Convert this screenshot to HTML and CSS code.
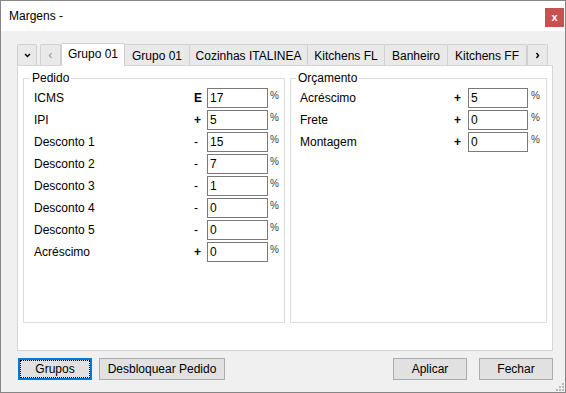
FILE: index.html
```html
<!DOCTYPE html>
<html lang="pt">
<head>
    <meta charset="UTF-8">
    <title>Margens -</title>
    <link rel="stylesheet" href="styles.css">
</head>
<body>
    <div class="window">
        <div class="titlebar">
            <span class="title">Margens -</span>
            <button class="close">x</button>
        </div>

        <div class="client">
            <div class="tabs">
                <div class="tab-btn tab-btn-menu">
                    <svg width="7" height="5" viewBox="0 0 7 5"><path d="M1 1 L3.5 3.5 L6 1" fill="none" stroke="#000" stroke-width="1.4"/></svg>
                </div>
                <div class="tab-btn tab-btn-prev">
                    <svg width="5" height="7" viewBox="0 0 5 7"><path d="M3.5 1 L1.5 3.5 L3.5 6" fill="none" stroke="#9a9a9a" stroke-width="1.2"/></svg>
                </div>
                <div class="tab active" style="width:64px">Grupo 01</div>
                <div class="tab" style="width:66px">Grupo 01</div>
                <div class="tab" style="width:119px">Cozinhas ITALINEA</div>
                <div class="tab" style="width:78px">Kitchens FL</div>
                <div class="tab" style="width:64px">Banheiro</div>
                <div class="tab" style="width:80px">Kitchens FF</div>
                <div class="tab-btn tab-btn-next">
                    <svg width="5" height="7" viewBox="0 0 5 7"><path d="M1.5 1 L3.5 3.5 L1.5 6" fill="none" stroke="#000" stroke-width="1.4"/></svg>
                </div>
            </div>

            <div class="panel">
                <fieldset class="group group-pedido">
                    <legend>Pedido</legend>
                    <div class="row"><span class="label">ICMS</span><span class="sign bold">E</span><input class="field" value="17"><span class="pct">%</span></div>
                    <div class="row"><span class="label">IPI</span><span class="sign bold">+</span><input class="field" value="5"><span class="pct">%</span></div>
                    <div class="row"><span class="label">Desconto 1</span><span class="sign">-</span><input class="field" value="15"><span class="pct">%</span></div>
                    <div class="row"><span class="label">Desconto 2</span><span class="sign">-</span><input class="field" value="7"><span class="pct">%</span></div>
                    <div class="row"><span class="label">Desconto 3</span><span class="sign">-</span><input class="field" value="1"><span class="pct">%</span></div>
                    <div class="row"><span class="label">Desconto 4</span><span class="sign">-</span><input class="field" value="0"><span class="pct">%</span></div>
                    <div class="row"><span class="label">Desconto 5</span><span class="sign">-</span><input class="field" value="0"><span class="pct">%</span></div>
                    <div class="row"><span class="label">Acréscimo</span><span class="sign bold">+</span><input class="field" value="0"><span class="pct">%</span></div>
                </fieldset>

                <fieldset class="group group-orcamento">
                    <legend>Orçamento</legend>
                    <div class="row"><span class="label">Acréscimo</span><span class="sign bold">+</span><input class="field" value="5"><span class="pct">%</span></div>
                    <div class="row"><span class="label">Frete</span><span class="sign bold">+</span><input class="field" value="0"><span class="pct">%</span></div>
                    <div class="row"><span class="label">Montagem</span><span class="sign bold">+</span><input class="field" value="0"><span class="pct">%</span></div>
                </fieldset>
            </div>

            <div class="buttons">
                <button class="btn focused">Grupos</button>
                <button class="btn btn-wide">Desbloquear Pedido</button>
                <span class="spacer"></span>
                <button class="btn">Aplicar</button>
                <button class="btn btn-last">Fechar</button>
            </div>
        </div>

        <svg class="grip" width="9" height="9" viewBox="0 0 9 9">
            <rect x="7" y="1" width="2" height="2" fill="#b8b8b8"/>
            <rect x="4" y="4" width="2" height="2" fill="#b8b8b8"/>
            <rect x="7" y="4" width="2" height="2" fill="#b8b8b8"/>
            <rect x="1" y="7" width="2" height="2" fill="#b8b8b8"/>
            <rect x="4" y="7" width="2" height="2" fill="#b8b8b8"/>
            <rect x="7" y="7" width="2" height="2" fill="#b8b8b8"/>
        </svg>
    </div>
</body>
</html>
```

FILE: styles.css
```css
body {
    margin: 0;
    font-family: "Liberation Sans", Arial, sans-serif;
    font-size: 12px;
    color: #000;
}
.window {
    position: relative;
    width: 566px;
    height: 393px;
    box-sizing: border-box;
    border: 1px solid #868686;
    background: #f0f0f0;
    display: flex;
    flex-direction: column;
}
.titlebar {
    height: 30px;
    background: #fff;
    display: flex;
    align-items: flex-start;
}
.title {
    padding-left: 8px;
    line-height: 30px;
    font-size: 12px;
}
.close {
    margin: 7px 1px 0 auto;
    width: 19px;
    height: 19px;
    padding: 0;
    border: none;
    background: #c75050;
    color: #fff;
    font-family: "Liberation Sans", Arial, sans-serif;
    font-weight: bold;
    font-size: 11px;
    line-height: 17px;
}
.client {
    flex: 1;
    display: flex;
    flex-direction: column;
    padding: 12px 12px 12px 16px;
}
.tabs {
    height: 22px;
    display: flex;
    align-items: flex-end;
}
.tab,
.tab-btn {
    height: 21px;
    box-sizing: border-box;
    border: 1px solid #d0d0d0;
    border-bottom: none;
    background: #e9e9e9;
    display: flex;
    align-items: center;
    justify-content: center;
    white-space: nowrap;
    border-radius: 2px 2px 0 0;
}
.tab {
    margin-left: -1px;
    padding-top: 1px;
}
.tab.active {
    height: 23px;
    margin-bottom: -1px;
    margin-left: 0;
    background: #fff;
    position: relative;
    z-index: 1;
    padding-top: 0;
    padding-bottom: 2px;
}
.tab-btn-menu {
    width: 20px;
}
.tab-btn-prev {
    width: 21px;
    margin-left: 3px;
}
.tab-btn-next {
    width: 21px;
    margin-left: 0;
}
.panel {
    height: 286px;
    box-sizing: border-box;
    border: 1px solid #d6d6d6;
    background: #fff;
    display: flex;
    gap: 5px;
    padding: 5px 5px 27px 5px;
}
.group {
    margin: 0;
    min-width: 0;
    border: 1px solid #dcdcdc;
    padding: 3px 0 0 10px;
    display: flex;
    flex-direction: column;
    gap: 2px;
}
.group legend {
    margin-left: -4px;
    padding: 0 2px;
    line-height: 14px;
}
.group-pedido {
    width: 262px;
    box-sizing: border-box;
}
.group-orcamento {
    width: 257px;
    box-sizing: border-box;
    padding-left: 9px;
    padding-right: 1px;
}
.row {
    height: 20px;
    display: flex;
    align-items: center;
}
.label {
    flex: 1;
}
.sign {
    width: 13px;
}
.group-orcamento .sign {
    width: 14px;
}
.bold {
    font-weight: bold;
}
.field {
    width: 61px;
    height: 20px;
    box-sizing: border-box;
    margin: 0;
    border: 1px solid #7a7a7a;
    padding: 0 2px;
    font-family: "Liberation Sans", Arial, sans-serif;
    font-size: 12px;
    color: #000;
    background: #fff;
    outline: none;
}
.group-orcamento .field {
    width: 60px;
}
.pct {
    width: 14px;
    padding-left: 2px;
    align-self: flex-start;
    margin-top: 2px;
    font-size: 10px;
    letter-spacing: -1px;
    color: #3c3c3c;
}
.group-orcamento .pct {
    padding-left: 3px;
}
.buttons {
    margin-top: 7px;
    display: flex;
    padding-left: 1px;
}
.btn {
    height: 22px;
    width: 74px;
    padding: 0;
    box-sizing: border-box;
    border: 1px solid #adadad;
    background: #e1e1e1;
    font-family: "Liberation Sans", Arial, sans-serif;
    font-size: 12px;
    color: #000;
    margin-right: 7px;
}
.btn.focused {
    border: 2px solid #0078d7;
    outline: 1px dotted #000;
    outline-offset: -3px;
}
.btn-wide {
    width: 126px;
}
.spacer {
    flex: 1;
}
.btn-last {
    margin-right: 0;
    margin-left: 5px;
}
.grip {
    position: absolute;
    right: 1px;
    bottom: 1px;
}
```
